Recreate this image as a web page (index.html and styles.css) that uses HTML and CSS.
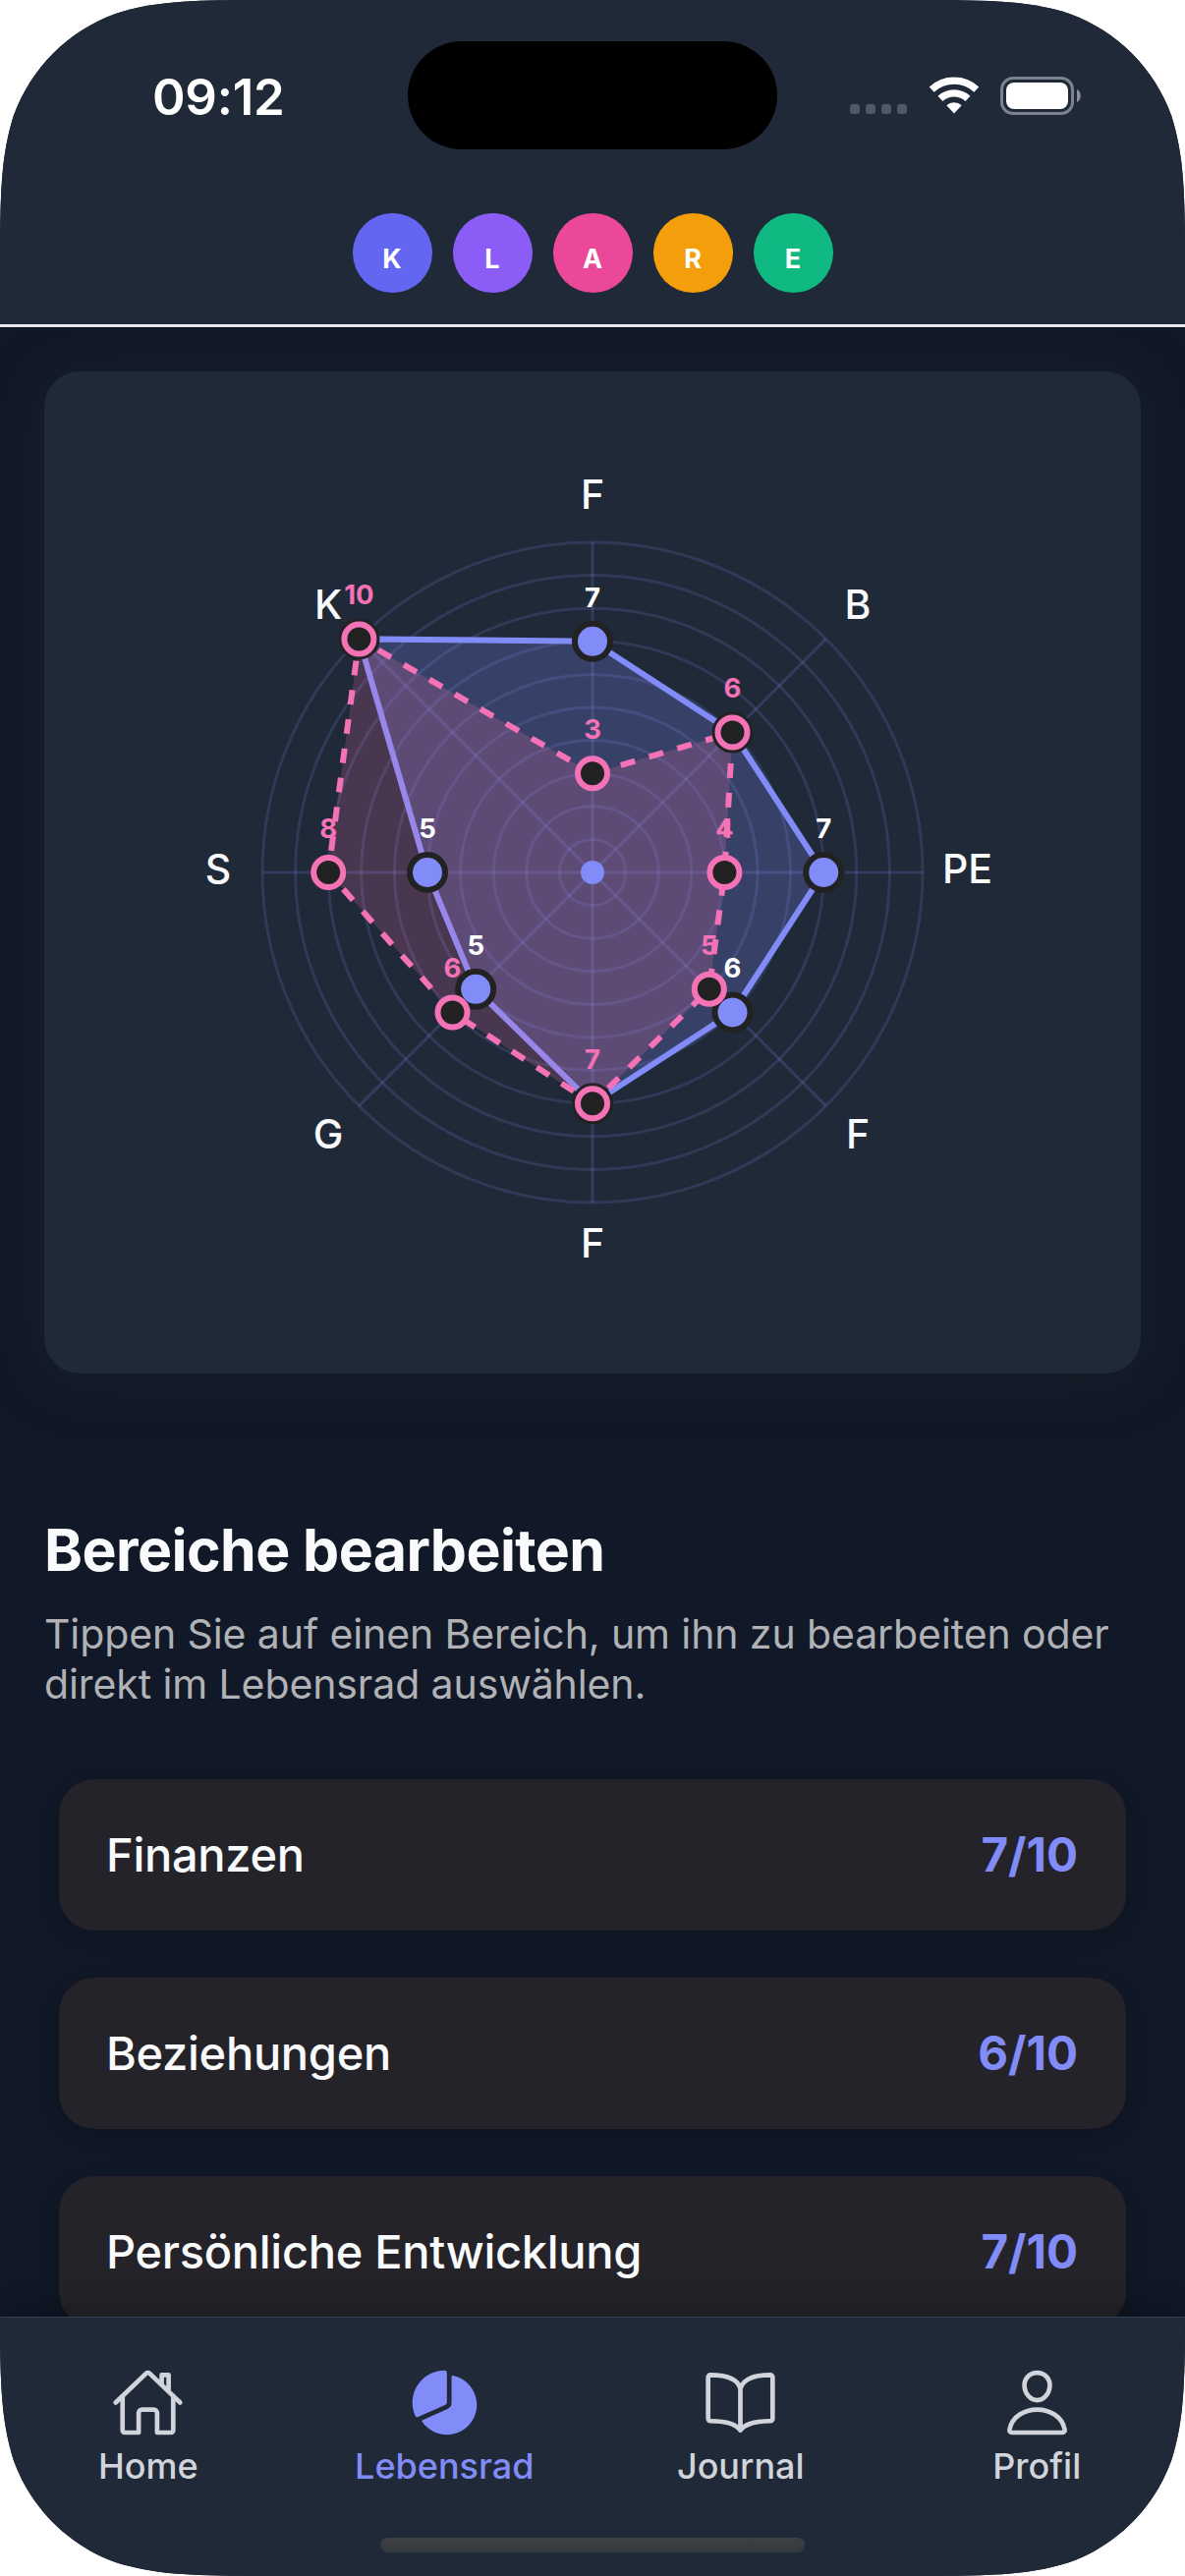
FILE: index.html
```html
<!DOCTYPE html>
<html lang="de">
<head>
<meta charset="utf-8">
<title>Lebensrad</title>
<link rel="stylesheet" href="styles.css">
</head>
<body>
<div class="screen">
  <header class="header">
    <div class="status">
      <span class="time">09:12</span>
      <span class="island"></span>
      <div class="status-icons">
        <svg class="signal" viewBox="0 0 58 10"><rect width="10" height="10" rx="3"/><rect x="16" width="10" height="10" rx="3"/><rect x="32" width="10" height="10" rx="3"/><rect x="48" width="10" height="10" rx="3"/></svg>
        <svg class="wifi" viewBox="0 0 52 38"><path class="arc" d="M3.2 13.1A33.4 33.4 0 0 1 48.8 13.1M11.95 22.4A20.6 20.6 0 0 1 40.05 22.4"/><path class="dot" d="M26 37.5L18.3 29.2A11.3 11.3 0 0 1 33.7 29.2Z"/></svg>
        <svg class="battery" viewBox="0 0 82 39"><rect class="shell" x="1.5" y="1.5" width="72" height="36" rx="11.5"/><rect class="level" x="6" y="6" width="63" height="27" rx="8"/><path class="nub" d="M78 13C83 15 83 24 78 26Z"/></svg>
      </div>
    </div>
    <div class="badges">
      <span class="badge indigo">K</span>
      <span class="badge violet">L</span>
      <span class="badge pink">A</span>
      <span class="badge amber">R</span>
      <span class="badge green">E</span>
    </div>
  </header>

  <main class="content">
    <section class="card">
      <svg class="wheel" viewBox="-558 -510 1116 1020">
        <g class="rings">
          <circle r="33.6"/><circle r="67.2"/><circle r="100.8"/><circle r="134.4"/><circle r="168"/>
          <circle r="201.6"/><circle r="235.2"/><circle r="268.8"/><circle r="302.4"/><circle r="336"/>
        </g>
        <path class="axes" d="M0 0V-336M0 0L237.6 -237.6M0 0H336M0 0L237.6 237.6M0 0V336M0 0L-237.6 237.6M0 0H-336M0 0L-237.6 -237.6"/>
        <g class="names">
          <text x="0" y="-370">F</text>
          <text x="270" y="-258.5">B</text>
          <text x="381.5" y="11">PE</text>
          <text x="270" y="280.5">F</text>
          <text x="0" y="391.5">F</text>
          <text x="-269" y="280.5">G</text>
          <text x="-381" y="11">S</text>
          <text x="-269" y="-258.5">K</text>
        </g>
        <path class="area now" d="M0 -235.2L142.5 -142.5L235.2 0L142.5 142.5L0 235.2L-118.8 118.8L-168 0L-237.6 -237.6Z"/>
        <path class="area goal" d="M0 -100.8L142.5 -142.5L134.4 0L118.8 118.8L0 235.2L-142.5 142.5L-268.8 0L-237.6 -237.6Z"/>
        <g class="dots now">
          <circle cy="-235.2" r="18"/><circle cx="142.5" cy="-142.5" r="18"/><circle cx="235.2" r="18"/><circle cx="142.5" cy="142.5" r="18"/>
          <circle cy="235.2" r="18"/><circle cx="-118.8" cy="118.8" r="18"/><circle cx="-168" r="18"/><circle cx="-237.6" cy="-237.6" r="18"/>
        </g>
        <g class="dots goal">
          <circle cy="-100.8" r="15"/><circle cx="142.5" cy="-142.5" r="15"/><circle cx="134.4" r="15"/><circle cx="118.8" cy="118.8" r="15"/>
          <circle cy="235.2" r="15"/><circle cx="-142.5" cy="142.5" r="15"/><circle cx="-268.8" r="15"/><circle cx="-237.6" cy="-237.6" r="15"/>
        </g>
        <g class="values now">
          <text x="0" y="-270.5">7</text><text x="235.2" y="-35.5">7</text><text x="142.5" y="107">6</text>
          <text x="-118.8" y="83.5">5</text><text x="-168" y="-35.5">5</text>
        </g>
        <g class="values goal">
          <text x="0" y="-136.5">3</text><text x="142.5" y="-178">6</text><text x="134.4" y="-35.5">4</text><text x="118.8" y="83.5">5</text>
          <text x="0" y="199.5">7</text><text x="-142.5" y="107">6</text><text x="-268.8" y="-35.5">8</text><text x="-237.6" y="-273">10</text>
        </g>
        <circle class="hub" r="12"/>
      </svg>
    </section>

    <h1 class="title">Bereiche bearbeiten</h1>
    <p class="hint">Tippen Sie auf einen Bereich, um ihn zu bearbeiten oder<br>direkt im Lebensrad auswählen.</p>

    <ul class="areas">
      <li class="row"><span class="name">Finanzen</span><span class="score">7/10</span></li>
      <li class="row"><span class="name">Beziehungen</span><span class="score">6/10</span></li>
      <li class="row"><span class="name">Persönliche Entwicklung</span><span class="score">7/10</span></li>
    </ul>
  </main>

  <nav class="tabbar">
    <div class="tabs">
      <a class="tab">
        <svg class="icon" viewBox="0 0 512 512"><path d="M80 212v236a16 16 0 0016 16h96V328a24 24 0 0124-24h80a24 24 0 0124 24v136h96a16 16 0 0016-16V212"/><path d="M480 256L266.890 52c-5-5.280-16.690-5.340-21.780 0L32 256M400 179V64h-48v69"/></svg>
        <span class="label">Home</span>
      </a>
      <a class="tab active">
        <svg class="icon solid" viewBox="0 0 512 512"><path d="M66.100 357a16 16 0 01-14.610-9.460A224 224 0 01256 32a16 16 0 0116 16v208a16 16 0 01-9.470 14.610l-189.900 84.950A15.930 15.930 0 0166.100 357z"/><path d="M313.590 68.180A8 8 0 00304 76v180a48.070 48.070 0 01-28.400 43.820L103.130 377a8 8 0 00-3.350 11.810 208.420 208.420 0 0048.460 50.410A206.320 206.320 0 00272 480c114.700 0 208-93.310 208-208 0-100.450-71.580-184.500-166.410-203.820z"/></svg>
        <span class="label">Lebensrad</span>
      </a>
      <a class="tab">
        <svg class="icon" viewBox="0 0 512 512"><path d="M256 160c16-63.160 76.430-95.410 208-96a15.940 15.940 0 0116 16v288a16 16 0 01-16 16c-128 0-177.450 25.810-208 64-30.370-38-80-64-208-64-9.880 0-16-8.050-16-17.930V80a15.940 15.940 0 0116-16c131.570.590 192 32.840 208 96zM256 160v288"/></svg>
        <span class="label">Journal</span>
      </a>
      <a class="tab">
        <svg class="icon" viewBox="0 0 512 512"><path d="M344 144c-3.920 52.870-44 96-88 96s-84.150-43.120-88-96c-4-55 35-96 88-96s92 42 88 96z"/><path d="M256 304c-87 0-175.300 48-191.640 138.600C62.390 453.520 68.570 464 80 464h352c11.440 0 17.620-10.480 15.650-21.400C431.300 352 343 304 256 304z"/></svg>
        <span class="label">Profil</span>
      </a>
    </div>
    <div class="home-indicator"></div>
  </nav>
</div>
</body>
</html>
```
FILE: styles.css
```css
* { box-sizing: border-box; }

body {
  margin: 0;
  background: #fff;
  font-family: Inter, "Liberation Sans", sans-serif;
  color: #f9fafb;
}

.screen {
  width: 1206px;
  height: 2622px;
  display: flex;
  flex-direction: column;
  overflow: hidden;
  background: #111827;
  clip-path: path("M284.300 0C202.500 0 161.500 0 117.500 13.900C69.300 31.400 31.400 69.300 13.900 117.500C0 161.500 0 202.500 0 284.300V2337.700C0 2419.500 0 2460.500 13.900 2504.500C31.400 2552.700 69.300 2590.600 117.500 2608.100C161.500 2622 202.500 2622 284.300 2622H921.700C1003.500 2622 1044.500 2622 1088.500 2608.100C1136.700 2590.600 1174.600 2552.700 1192.100 2504.500C1206 2460.500 1206 2419.500 1206 2337.700V284.300C1206 202.500 1206 161.500 1192.100 117.500C1174.600 69.300 1136.700 31.400 1088.500 13.900C1044.500 0 1003.500 0 921.700 0Z");
}

/* Header */
.header {
  flex: none;
  height: 333px;
  background: #1f2937;
  border-bottom: 3px solid #e5e7eb;
}

.status {
  display: grid;
  grid-template-columns: 415px 376px 415px;
  align-items: center;
  padding-top: 42px;
}

.time {
  padding: 2px 0 0 155px;
  font-size: 51px;
  font-weight: 600;
  letter-spacing: -0.3px;
  color: #fff;
}

.island {
  height: 110px;
  border-radius: 55px;
  background: #000;
}

.status-icons {
  display: flex;
  align-items: center;
  padding-left: 74px;
}

.signal { width: 58px; height: 10px; margin: 28px 22px 0 0; fill: #4f5863; }
.wifi { width: 52px; height: 38px; margin-right: 21px; }
.wifi .arc { fill: none; stroke: #fff; stroke-width: 7.2; }
.wifi .dot { fill: #fff; }
.battery { width: 82px; height: 39px; }
.battery .shell { fill: none; stroke: #7b828b; stroke-width: 3; }
.battery .level { fill: #fff; }
.battery .nub { fill: #8a9098; }

.badges {
  display: flex;
  justify-content: center;
  gap: 21px;
  padding-top: 65px;
}

.badge {
  width: 81px;
  height: 81px;
  padding-top: 13px;
  border-radius: 50%;
  font-size: 27px;
  font-weight: 700;
  line-height: 67px;
  text-align: center;
  color: #fff;
}

.indigo { background: #6366f1; }
.violet { background: #8b5cf6; }
.pink { background: #ec4899; }
.amber { background: #f59e0b; }
.green { background: #10b981; }

/* Content */
.content {
  flex: 1;
  min-height: 0;
  overflow: hidden;
  padding: 45px 45px 0;
}

.card {
  height: 1020px;
  border-radius: 36px;
  background: #1f2937;
  box-shadow: 0 4px 56px rgba(34, 42, 46, .5);
}

.wheel { display: block; width: 1116px; height: 1020px; }
.rings { fill: none; stroke: rgba(129, 140, 248, .17); stroke-width: 3; }
.axes { fill: none; stroke: rgba(129, 140, 248, .2); stroke-width: 3; }
.wheel text { text-anchor: middle; }
.names { font-size: 41px; font-weight: 500; fill: #f9fafb; }
.area { stroke-width: 6; }
.area.now { fill: rgba(129, 140, 248, .25); stroke: #818cf8; }
.area.goal { fill: rgba(244, 114, 182, .2); stroke: #f472b6; stroke-dasharray: 15 15; }
.dots { stroke-width: 6; }
.dots.now { fill: #818cf8; stroke: #222; }
.dots.goal { fill: #222; stroke: #f472b6; }
.values { font-size: 27.5px; font-weight: 700; }
.values.now { fill: #fff; }
.values.goal { fill: #f472b6; }
.hub { fill: #818cf8; }

.title {
  margin: 144px 0 0;
  font-size: 59px;
  font-weight: 700;
  line-height: 72px;
  letter-spacing: -0.6px;
}

.hint {
  margin: 24px 0 0;
  font-size: 41px;
  line-height: 51px;
  letter-spacing: -0.1px;
  color: #b0b2b6;
}

.areas {
  display: flex;
  flex-direction: column;
  gap: 48px;
  margin: 71px 15px 0;
  padding: 0;
  list-style: none;
}

.row {
  display: flex;
  justify-content: space-between;
  align-items: center;
  height: 154px;
  padding: 0 49px 2px 48px;
  border-radius: 36px;
  background: #242329;
  box-shadow: 0 6px 24px rgba(0, 0, 0, .2);
}

.name { font-size: 47px; font-weight: 500; letter-spacing: -0.3px; }
.score { font-size: 47.5px; font-weight: 700; color: #818cf8; }

/* Bottom navigation */
.tabbar {
  flex: none;
  z-index: 1;
  height: 264px;
  border-top: 1px solid #374151;
  background: #1f2937;
  box-shadow: 0 -6px 30px rgba(0, 0, 0, .3);
}

.tabs { display: grid; grid-template-columns: repeat(4, 1fr); height: 224px; }

.tab {
  display: flex;
  flex-direction: column;
  align-items: center;
  padding-top: 49px;
  color: #d1d5db;
}

.tab.active { color: #818cf8; }

.icon {
  width: 75px;
  height: 75px;
  fill: none;
  stroke: currentColor;
  stroke-width: 32;
  stroke-linecap: round;
  stroke-linejoin: round;
}

.icon.solid { fill: currentColor; stroke: none; }
.label { margin-top: 5px; font-size: 36px; font-weight: 460; line-height: 44px; }

.home-indicator {
  width: 432px;
  height: 15px;
  margin: 0 auto;
  border-radius: 8px;
  background: linear-gradient(#3d3f42, #353a40);
}
```
